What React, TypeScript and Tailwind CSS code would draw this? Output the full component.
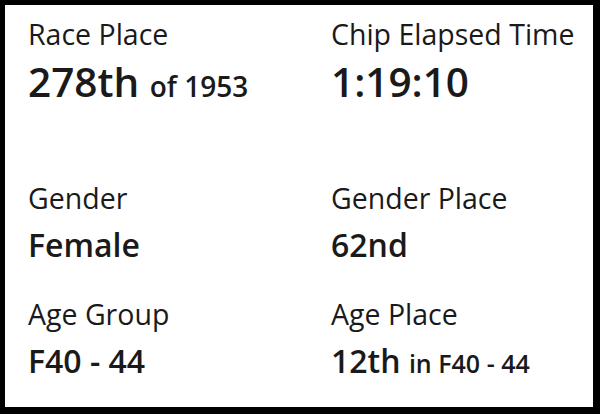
const Stat = ({ label, children, big }: { label: string; children: React.ReactNode; big?: boolean }) => (
  <div className="flex flex-col">
    <div className="text-[28.5px] leading-[32px] text-[#1a1a1a]">{label}</div>
    <div
      className={
        big
          ? "mt-[8px] text-[40.5px] leading-[48px] font-semibold text-[#1a1a1a]"
          : "mt-[11px] text-[32px] leading-[40px] font-semibold text-[#1a1a1a]"
      }
    >
      {children}
    </div>
  </div>
);

export default function App() {
  return (
    <div className="w-[600px] h-[414px] bg-black pt-[5px] pl-[5px]" style={{ fontFamily: '"Open Sans", sans-serif' }}>
      <div className="w-[588px] h-[402px] bg-white pt-[13px] pl-[23px]">
        <div className="grid grid-cols-[303px_1fr]">
          <Stat label="Race Place" big>
            278th <span className="text-[28px]">of 1953</span>
          </Stat>
          <Stat label="Chip Elapsed Time" big>
            1:19:10
          </Stat>
        </div>
        <div className="grid grid-cols-[303px_1fr] mt-[72px]">
          <Stat label="Gender">Female</Stat>
          <Stat label="Gender Place">62nd</Stat>
        </div>
        <div className="grid grid-cols-[303px_1fr] mt-[33px]">
          <Stat label="Age Group">F40 - 44</Stat>
          <Stat label="Age Place">
            12th <span className="text-[25px]">in F40 - 44</span>
          </Stat>
        </div>
      </div>
    </div>
  );
}
